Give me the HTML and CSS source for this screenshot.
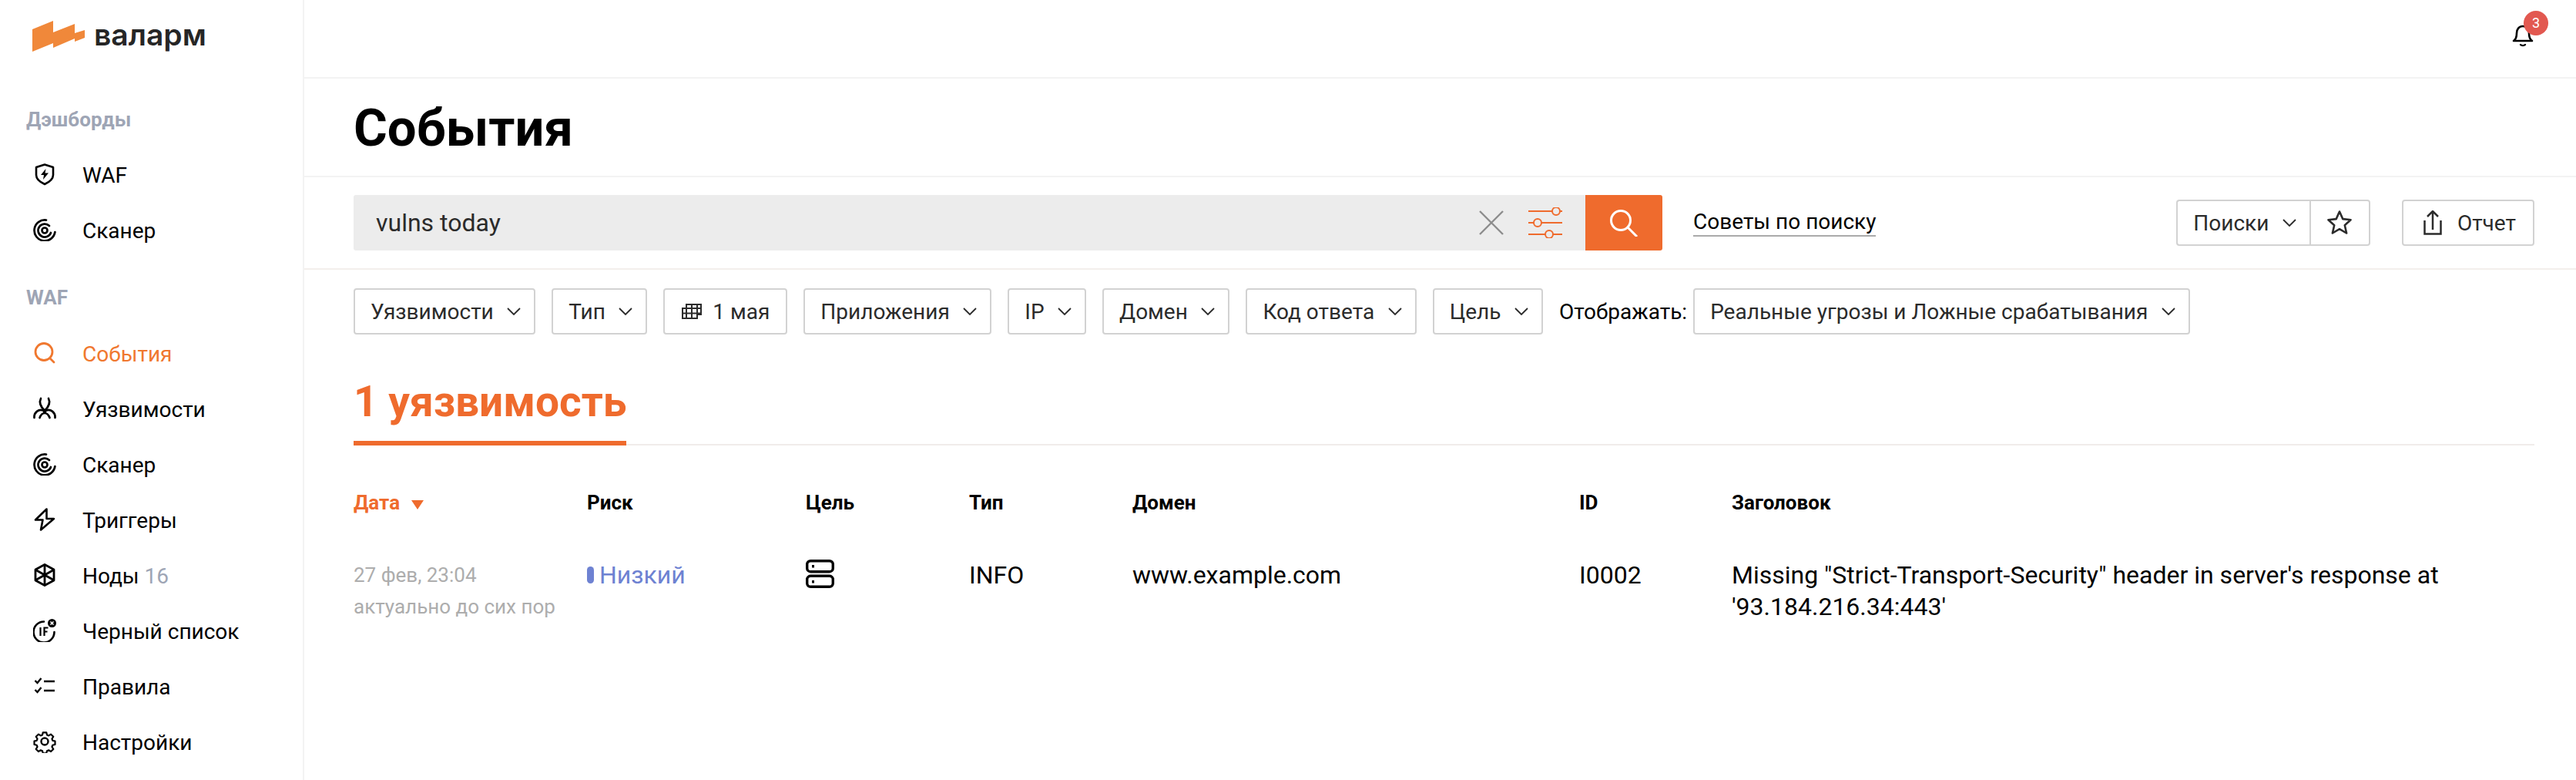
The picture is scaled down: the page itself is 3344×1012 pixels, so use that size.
FILE: index.html
```html
<!DOCTYPE html>
<html lang="ru">
<head>
    <meta charset="utf-8">
    <title>Валарм - События</title>
    <link rel="stylesheet" href="styles.css">
</head>
<body>
<div class="app">
    <aside class="sidebar">
        <div class="logo">
            <svg class="logo-mark" viewBox="0 0 70 41"><polygon fill="#f0883a" points="0,11 27,0 27,15 55,4 55,16 68,12 68,22 55,27 55,23 27,35 27,29 0,40"/></svg>
            <span class="logo-text">валарм</span>
        </div>
        <div class="nav-label nav-label-first">Дэшборды</div>
        <a class="nav-item">
            <svg class="nav-icon" viewBox="0 0 30 30"><path d="M15 2.500 26 6v10c0 5.500-4.500 9-11 12C8.500 25 4 21.500 4 16V6z" fill="none" stroke="#000" stroke-width="2.600" stroke-linejoin="round"/><path d="M16.500 8 10 16h4l-1 6 7-8.500h-4.500z" fill="#000"/></svg>
            <span>WAF</span>
        </a>
        <a class="nav-item">
            <svg class="nav-icon" viewBox="0 0 30 30"><g fill="none" stroke="#000" stroke-width="2.700" stroke-linecap="round"><path d="M17 2.600A13.500 13.500 0 1 0 28.400 18"/><path d="M21 10A8.500 8.500 0 1 0 23 19"/><circle cx="15" cy="16" r="3.500"/></g></svg>
            <span>Сканер</span>
        </a>
        <div class="nav-label">WAF</div>
        <a class="nav-item nav-item-active">
            <svg class="nav-icon" viewBox="0 0 30 30"><circle cx="14" cy="13.500" r="11" fill="none" stroke="#f0782f" stroke-width="2.800"/><path d="M22 22l5 5" stroke="#f0782f" stroke-width="2.800" stroke-linecap="round"/></svg>
            <span>События</span>
        </a>
        <a class="nav-item">
            <svg class="nav-icon" viewBox="0 0 30 30"><g fill="none" stroke="#000" stroke-width="2.700" stroke-linecap="round"><path d="M10 2C7 8 10 13 15 18 20 13 23 8 20 2"/><path d="M1.500 27C1 20 7 15.500 13 17.500"/><path d="M28.500 27C29 20 23 15.500 17 17.500"/><path d="M8.500 27C10 23 12.500 21 15 21S20 23 21.500 27"/></g><circle cx="15" cy="18" r="2.500"/></svg>
            <span>Уязвимости</span>
        </a>
        <a class="nav-item">
            <svg class="nav-icon" viewBox="0 0 30 30"><g fill="none" stroke="#000" stroke-width="2.700" stroke-linecap="round"><path d="M17 2.600A13.500 13.500 0 1 0 28.400 18"/><path d="M21 10A8.500 8.500 0 1 0 23 19"/><circle cx="15" cy="16" r="3.500"/></g></svg>
            <span>Сканер</span>
        </a>
        <a class="nav-item">
            <svg class="nav-icon" viewBox="0 0 30 30"><path d="M17.500 1.500 3 15.500h9.500L10 28.500 27 14h-9.500z" fill="none" stroke="#000" stroke-width="2.600" stroke-linejoin="round"/></svg>
            <span>Триггеры</span>
        </a>
        <a class="nav-item">
            <svg class="nav-icon" viewBox="0 0 30 30"><path d="M15 1.500 27 8v14l-12 6.500L3 22V8z" fill="none" stroke="#000" stroke-width="2.800" stroke-linejoin="round"/><path d="M15 2v26M3.500 8.500l23 13M26.500 8.500l-23 13" stroke="#000" stroke-width="2.800"/></svg>
            <span>Ноды <span class="nav-count">16</span></span>
        </a>
        <a class="nav-item">
            <svg class="nav-icon" viewBox="0 0 30 30"><path d="M14 3.500A13.500 13.500 0 1 0 27.500 17" fill="none" stroke="#000" stroke-width="2.600" stroke-linecap="round"/><path d="M9.500 11v11M14.500 22V11.500h5M14.500 16.500h4" fill="none" stroke="#000" stroke-width="2.200"/><circle cx="24.500" cy="5.500" r="5.500"/><path d="M22.500 3.500l4 4M26.500 3.500l-4 4" stroke="#fff" stroke-width="1.600"/></svg>
            <span>Черный список</span>
        </a>
        <a class="nav-item">
            <svg class="nav-icon" viewBox="0 0 30 30"><path d="M2.500 8l3 3 5-6M2.500 20l3 3 5-6" fill="none" stroke="#000" stroke-width="2.400"/><path d="M14 9h14M14 21h14" stroke="#000" stroke-width="2.600"/></svg>
            <span>Правила</span>
        </a>
        <a class="nav-item">
            <svg class="nav-icon" viewBox="0 0 30 30"><g fill="none" stroke="#000" stroke-width="2.400" stroke-linejoin="round"><path d="M12.500 2h5l.8 3.600 2.500 1 3.200-2 3.500 3.500-2 3.200 1 2.500 3.500.7v5l-3.500.8-1 2.500 2 3.200-3.500 3.500-3.200-2-2.500 1-.8 3.500h-5l-.8-3.500-2.500-1-3.200 2-3.500-3.500 2-3.200-1-2.500-3.500-.8v-5l3.500-.7 1-2.500-2-3.200 3.500-3.500 3.200 2 2.500-1z" transform="translate(1.500 1.500) scale(.9)"/><circle cx="15" cy="15" r="4.500"/></g></svg>
            <span>Настройки</span>
        </a>
    </aside>

    <main class="main">
        <div class="topbar">
            <div class="bell">
                <svg class="bell-icon" viewBox="0 0 30 32"><path d="M3 24c3-2 4-5 4-10 0-5 3-9 8-9s8 4 8 9c0 5 1 8 4 10z" fill="none" stroke="#000" stroke-width="2.600" stroke-linejoin="round"/><path d="M12 29c1.500 1.500 4.500 1.500 6 0" fill="none" stroke="#000" stroke-width="2.400" stroke-linecap="round"/></svg>
                <span class="badge">3</span>
            </div>
        </div>
        <div class="title-row">
            <h1>События</h1>
        </div>
        <div class="search-row">
            <div class="search-box">
                <span class="search-query">vulns today</span>
                <svg class="search-clear" viewBox="0 0 32 32"><path d="M1 1l30 30M31 1 1 31" stroke="#8c8c8c" stroke-width="2.400"/></svg>
                <svg class="search-sliders" viewBox="0 0 44 40"><g stroke="#ef6b2d" stroke-width="2" fill="none"><path d="M0 5h31M41 5h3"/><circle cx="36" cy="5" r="5"/><path d="M0 20h7M17 20h27"/><circle cx="12" cy="20" r="5"/><path d="M0 35h22M32 35h12"/><circle cx="27" cy="35" r="5"/></g></svg>
            </div>
            <button class="search-button">
                <svg viewBox="0 0 38 36" width="38" height="36"><circle cx="15" cy="15" r="12.500" fill="none" stroke="#fff" stroke-width="3"/><path d="M24 24l12 12" stroke="#fff" stroke-width="3"/></svg>
            </button>
            <a class="search-tips">Советы по поиску</a>
            <div class="search-actions">
                <div class="btn-group">
                    <button class="btn btn-left">Поиски <svg class="chev" viewBox="0 0 18 10"><path d="M1 1l8 8 8-8" fill="none" stroke="#2b2b2b" stroke-width="1.800"/></svg></button>
                    <button class="btn btn-right">
                        <svg viewBox="0 0 34 34" width="34" height="34"><path d="M17 2.500l4.300 9.600 10.200 1.100-7.700 7 2.300 10.300L17 25.200 7.900 30.500l2.300-10.300-7.700-7 10.200-1.100z" fill="none" stroke="#2b2b2b" stroke-width="2.600" stroke-linejoin="round"/></svg>
                    </button>
                </div>
                <button class="btn btn-report">
                    <svg viewBox="0 0 24 32" width="24" height="32"><path d="M1.500 13v17.500h21V13M12 25V2M5 8l7-7 7 7" fill="none" stroke="#2b2b2b" stroke-width="2.500"/></svg>
                    Отчет
                </button>
            </div>
        </div>
        <div class="content">
            <div class="filters">
                <button class="btn">Уязвимости <svg class="chev" viewBox="0 0 18 10"><path d="M1 1l8 8 8-8" fill="none" stroke="#2b2b2b" stroke-width="1.800"/></svg></button>
                <button class="btn">Тип <svg class="chev" viewBox="0 0 18 10"><path d="M1 1l8 8 8-8" fill="none" stroke="#2b2b2b" stroke-width="1.800"/></svg></button>
                <button class="btn btn-date">
                    <svg viewBox="0 0 26 20" width="26" height="20"><path d="M6 1h19v13h-5v5H1V6h5zM6 1v18M13 1v18M20 1v13M1 6h24M1 12.500h24" fill="none" stroke="#2b2b2b" stroke-width="2"/></svg>
                    1 мая
                </button>
                <button class="btn">Приложения <svg class="chev" viewBox="0 0 18 10"><path d="M1 1l8 8 8-8" fill="none" stroke="#2b2b2b" stroke-width="1.800"/></svg></button>
                <button class="btn">IP <svg class="chev" viewBox="0 0 18 10"><path d="M1 1l8 8 8-8" fill="none" stroke="#2b2b2b" stroke-width="1.800"/></svg></button>
                <button class="btn">Домен <svg class="chev" viewBox="0 0 18 10"><path d="M1 1l8 8 8-8" fill="none" stroke="#2b2b2b" stroke-width="1.800"/></svg></button>
                <button class="btn">Код ответа <svg class="chev" viewBox="0 0 18 10"><path d="M1 1l8 8 8-8" fill="none" stroke="#2b2b2b" stroke-width="1.800"/></svg></button>
                <button class="btn">Цель <svg class="chev" viewBox="0 0 18 10"><path d="M1 1l8 8 8-8" fill="none" stroke="#2b2b2b" stroke-width="1.800"/></svg></button>
                <span class="filters-label">Отображать:</span>
                <button class="btn">Реальные угрозы и Ложные срабатывания <svg class="chev" viewBox="0 0 18 10"><path d="M1 1l8 8 8-8" fill="none" stroke="#2b2b2b" stroke-width="1.800"/></svg></button>
            </div>
            <div class="tabs">
                <div class="tab">1 уязвимость</div>
            </div>
            <div class="grid grid-head">
                <div class="sorted">Дата <i class="sort-arrow"></i></div>
                <div>Риск</div>
                <div>Цель</div>
                <div>Тип</div>
                <div>Домен</div>
                <div>ID</div>
                <div>Заголовок</div>
            </div>
            <div class="grid grid-row">
                <div class="date">27 фев, 23:04<br>актуально до сих пор</div>
                <div class="risk"><i class="risk-pill"></i>Низкий</div>
                <div>
                    <svg class="server" viewBox="0 0 37 37"><g fill="none" stroke="#000" stroke-width="3.400"><rect x="1.700" y="1.700" width="33.600" height="14" rx="4.500"/><rect x="1.700" y="21.300" width="33.600" height="14" rx="4.500"/></g><rect x="8" y="7" width="3" height="3.500"/><rect x="8" y="27" width="3" height="3.500"/></svg>
                </div>
                <div>INFO</div>
                <div>www.example.com</div>
                <div>I0002</div>
                <div>Missing "Strict-Transport-Security" header in server's response at '93.184.216.34:443'</div>
            </div>
        </div>
    </main>
</div>
</body>
</html>
```

FILE: styles.css
```css
body {
    margin: 0;
    font-family: Roboto, "Noto Sans", sans-serif;
    color: #000;
    background: #fff;
}

.app {
    display: flex;
    height: 1012px;
    overflow: hidden;
}

/* sidebar */
.sidebar {
    width: 393px;
    flex: none;
    border-right: 2px solid #f3f3f3;
}

.logo {
    height: 100px;
    display: flex;
    align-items: flex-start;
    padding: 27px 0 0 42px;
    box-sizing: border-box;
}

.logo-mark {
    width: 70px;
    height: 41px;
    flex: none;
}

.logo-text {
    margin: -5px 0 0 10px;
    font-family: Inter, sans-serif;
    font-size: 39px;
    font-weight: 600;
    line-height: 46px;
    color: #262626;
}

.nav-label {
    margin: 36px 0 20px 34px;
    height: 32px;
    font-size: 26px;
    font-weight: 700;
    line-height: 32px;
    color: #9ea5b5;
}

.nav-label-first {
    margin-top: 39px;
    margin-bottom: 19px;
}

.nav-item {
    height: 72px;
    display: flex;
    align-items: center;
    padding-left: 43px;
    gap: 34px;
    font-size: 28px;
}

.nav-item span {
    padding-top: 2px;
}

.nav-item .nav-count {
    padding-top: 0;
}

.nav-item-active {
    color: #f0782f;
}

.nav-icon {
    width: 30px;
    height: 30px;
    flex: none;
}

.nav-count {
    color: #9ea5b5;
}

/* header rows */
.main {
    flex: 1;
    min-width: 0;
}

.topbar {
    height: 100px;
    display: flex;
    justify-content: flex-end;
    border-bottom: 2px solid #f3f3f3;
    padding-right: 54px;
}

.bell {
    position: relative;
    margin-top: 29px;
    width: 30px;
    height: 32px;
}

.bell-icon {
    width: 30px;
    height: 32px;
}

.badge {
    position: absolute;
    left: 16px;
    top: -15px;
    width: 32px;
    height: 32px;
    border-radius: 50%;
    background: #e25850;
    color: #fff;
    font-size: 18px;
    line-height: 32px;
    text-align: center;
}

.title-row {
    height: 126px;
    padding-left: 64px;
    border-bottom: 2px solid #f3f3f3;
}

h1 {
    margin: 0;
    font-size: 67px;
    font-weight: 700;
    line-height: 128px;
}

.search-row {
    height: 118px;
    padding: 0 54px 0 64px;
    display: flex;
    align-items: center;
    border-bottom: 2px solid #f3efec;
}

.search-box {
    width: 1599px;
    height: 72px;
    box-sizing: border-box;
    background: #ececec;
    display: flex;
    align-items: center;
    padding: 0 30px 0 29px;
    border-radius: 3px 0 0 3px;
}

.search-query {
    flex: 1;
    font-size: 32px;
    color: #2b2b2b;
}

.search-clear {
    width: 32px;
    height: 32px;
    margin-right: 32px;
}

.search-sliders {
    width: 44px;
    height: 40px;
}

.search-button {
    width: 100px;
    height: 72px;
    border: 0;
    padding: 0;
    background: #ef6b2d;
    border-radius: 0 3px 3px 0;
    display: flex;
    align-items: center;
    justify-content: center;
}

.search-tips {
    margin-left: 40px;
    font-size: 28px;
    line-height: 32px;
    padding-bottom: 1px;
    border-bottom: 2px solid #aaa;
}

.search-actions {
    margin-left: auto;
    display: flex;
    gap: 41px;
}

.btn-group {
    display: flex;
}

.btn {
    height: 60px;
    box-sizing: border-box;
    display: inline-flex;
    align-items: center;
    gap: 17.5px;
    padding: 0 17px 0 20px;
    background: #fff;
    border: 2px solid #d2d2d2;
    border-radius: 4px;
    font-family: inherit;
    font-size: 28px;
    color: #2b2b2b;
    white-space: nowrap;
}

.btn-date {
    gap: 14px;
    padding-left: 22px;
    padding-right: 21px;
}

.btn-left {
    border-radius: 4px 0 0 4px;
    border-right: 0;
}

.btn-right {
    width: 79px;
    padding: 0;
    justify-content: center;
    border-radius: 0 4px 4px 0;
}

.btn-report {
    padding: 0 22px 0 26px;
    gap: 20px;
}

.chev {
    width: 18px;
    height: 10px;
    flex: none;
}

/* filters, tab, table */
.content {
    padding: 24px 54px 0 64px;
}

.filters {
    display: flex;
    align-items: center;
    gap: 21px;
}

.filters-label {
    font-size: 28px;
    margin-right: -13px;
}

.tabs {
    display: flex;
    margin-top: 52px;
    border-bottom: 2px solid #f0ecea;
}

.tab {
    height: 92px;
    box-sizing: border-box;
    margin-bottom: -2px;
    border-bottom: 6px solid #ef6b2d;
    font-size: 55px;
    font-weight: 700;
    line-height: 70px;
    color: #ef6b2d;
}

.grid {
    display: grid;
    grid-template-columns: 303px 284px 212px 212px 580px 198px 1fr;
}

.grid-head {
    margin-top: 54px;
    font-size: 26px;
    font-weight: 700;
    line-height: 40px;
}

.sorted {
    color: #ef6b2d;
}

.sort-arrow {
    display: inline-block;
    margin-left: 8px;
    border-top: 12px solid #ef6b2d;
    border-left: 8px solid transparent;
    border-right: 8px solid transparent;
}

.grid-row {
    margin-top: 54px;
    font-size: 32px;
    line-height: 41px;
}

.date {
    font-size: 26px;
    color: #adadad;
}

.risk {
    color: #6e82d2;
}

.risk-pill {
    display: inline-block;
    width: 9px;
    height: 22px;
    margin-right: 7px;
    border-radius: 5px;
    background: #6e82d2;
}

.server {
    display: block;
    width: 37px;
    height: 37px;
}
```
